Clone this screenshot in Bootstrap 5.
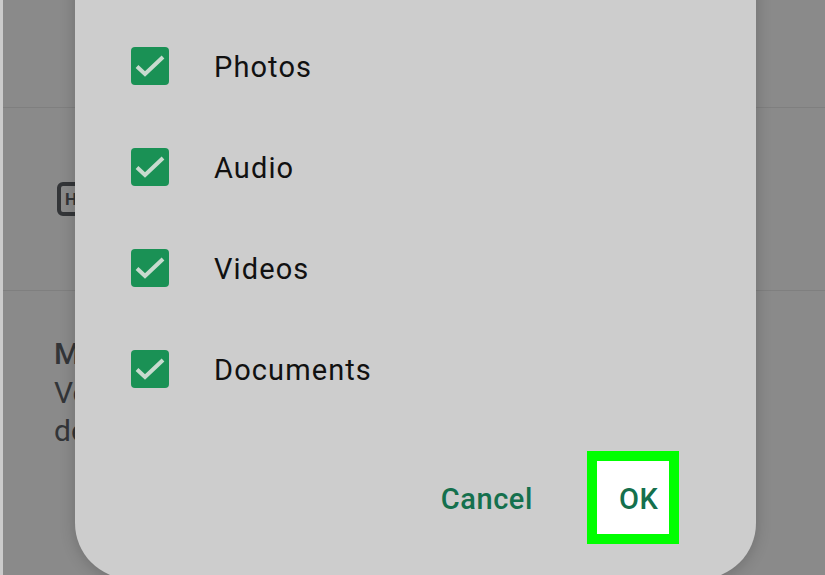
<!DOCTYPE html>
<html lang="en">
<head>
  <meta charset="UTF-8" />
  <meta name="viewport" content="width=device-width, initial-scale=1.0"/>
  <title>Media permissions</title>
  <link href="https://cdn.jsdelivr.net/npm/bootstrap@5.3.3/dist/css/bootstrap.min.css" rel="stylesheet">
  <style>
    html, body {
      height: 100%;
    }
    body {
      background-color: #cbcbcb;
      font-family: Roboto, "Liberation Sans", sans-serif;
      overflow: hidden;
    }
    .screen {
      position: relative;
      height: 575px;
      margin-left: 3px;
      background-color: #8a8a8a;
      overflow: hidden;
    }
    .bg-row {
      border-bottom: 1px solid #7f7f7f;
    }
    .bg-top { height: 108px; }
    .bg-icon { height: 183px; padding: 74px 0 0 54px; }
    .hd-icon {
      width: 40px;
      height: 34px;
      border: 4px solid #333538;
      border-radius: 6px;
      color: #333538;
      font-size: 17px;
      font-weight: 700;
      line-height: 26px;
      padding-left: 4px;
    }
    .bg-text {
      padding: 44px 0 0 51px;
      font-size: 30px;
      line-height: 38.5px;
      color: #333538;
      white-space: nowrap;
    }
    .bg-text strong { font-weight: 500; }
    .dialog {
      position: absolute;
      left: 72px;
      top: -60px;
      width: 681px;
      height: 639px;
      background-color: #cdcdcd;
      border-radius: 56px;
      box-shadow: 0 2px 16px rgba(0, 0, 0, .2);
      padding: 75px 0 0 56px;
    }
    .opt-row {
      height: 101px;
      gap: 45px;
      font-size: 29px;
      letter-spacing: 1.1px;
      color: #111;
    }
    .opt-label { padding-top: 4px; }
    .check-box {
      width: 38px;
      height: 38px;
      background-color: #1a9155;
      border-radius: 4px;
      flex-shrink: 0;
    }
    .dlg-actions {
      margin-top: 32px;
      margin-right: 77px;
      gap: 54px;
    }
    .dlg-btn {
      font-size: 29px;
      font-weight: 500;
      color: #14704d;
      letter-spacing: .6px;
    }
    .cancel-btn { padding-top: 4px; }
    .ok-box {
      width: 92px;
      height: 93px;
      background-color: #fff;
      border: 10px solid #00ff00;
      padding: 2px 0 0 22px;
      line-height: 73px;
    }
  </style>
</head>
<body>

<div class="screen">
  <div class="bg-row bg-top"></div>
  <div class="bg-row bg-icon">
    <div class="hd-icon">H</div>
  </div>
  <div class="bg-text">
    <strong>Ma</strong><br>
    Ve<br>
    de
  </div>

  <div class="dialog">
    <div class="opt-row d-flex align-items-center">
      <span class="check-box d-flex align-items-center justify-content-center">
        <svg width="38" height="38" viewBox="0 0 38 38"><path d="M6 19.5l8 7.500L32 10" fill="none" stroke="#c8dbcf" stroke-width="4"/></svg>
      </span>
      <span class="opt-label">Photos</span>
    </div>
    <div class="opt-row d-flex align-items-center">
      <span class="check-box d-flex align-items-center justify-content-center">
        <svg width="38" height="38" viewBox="0 0 38 38"><path d="M6 19.5l8 7.500L32 10" fill="none" stroke="#c8dbcf" stroke-width="4"/></svg>
      </span>
      <span class="opt-label">Audio</span>
    </div>
    <div class="opt-row d-flex align-items-center">
      <span class="check-box d-flex align-items-center justify-content-center">
        <svg width="38" height="38" viewBox="0 0 38 38"><path d="M6 19.5l8 7.500L32 10" fill="none" stroke="#c8dbcf" stroke-width="4"/></svg>
      </span>
      <span class="opt-label">Videos</span>
    </div>
    <div class="opt-row d-flex align-items-center">
      <span class="check-box d-flex align-items-center justify-content-center">
        <svg width="38" height="38" viewBox="0 0 38 38"><path d="M6 19.5l8 7.500L32 10" fill="none" stroke="#c8dbcf" stroke-width="4"/></svg>
      </span>
      <span class="opt-label">Documents</span>
    </div>
    <div class="dlg-actions d-flex justify-content-end align-items-center">
      <span class="dlg-btn cancel-btn">Cancel</span>
      <span class="dlg-btn ok-box">OK</span>
    </div>
  </div>
</div>

</body>
</html>
